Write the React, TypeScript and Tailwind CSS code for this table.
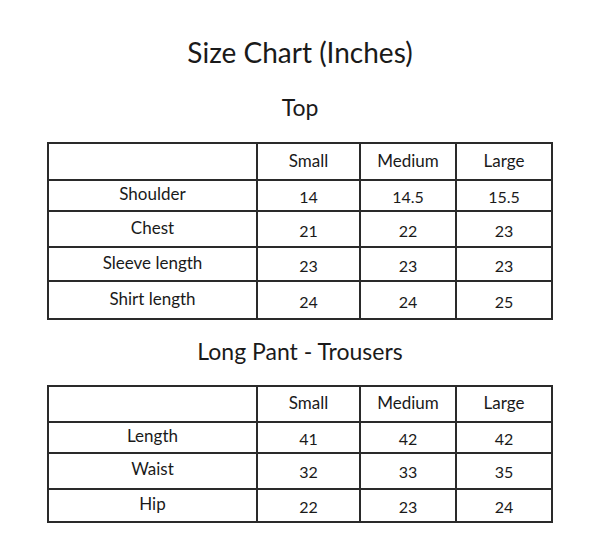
import React from "react";

const font = { fontFamily: "Lato, 'Open Sans', sans-serif" };

type Row = { label: string; vals: string[]; h: string };

function SizeTable({ rows }: { rows: Row[] }) {
  return (
    <table className="table-fixed border-collapse w-[504px] text-[17px] text-[#1a1a1a]">
      <colgroup>
        <col className="w-[209px]" />
        <col className="w-[103px]" />
        <col className="w-[96px]" />
        <col className="w-[96px]" />
      </colgroup>
      <tbody>
        {rows.map((r, i) => (
          <tr key={i} className={r.h}>
            <td className="border-2 border-[#2a2a2a] text-center align-middle p-0 pb-[3px]">{r.label}</td>
            {r.vals.map((v, j) => (
              <td
                key={j}
                className={
                  "border-2 border-[#2a2a2a] text-center align-middle p-0 " +
                  (i === 0 ? "pb-[2px]" : "pt-[3px] text-[16px]")
                }
              >
                {v}
              </td>
            ))}
          </tr>
        ))}
      </tbody>
    </table>
  );
}

export default function App() {
  const top: Row[] = [
    { label: "", vals: ["Small", "Medium", "Large"], h: "h-[37px]" },
    { label: "Shoulder", vals: ["14", "14.5", "15.5"], h: "h-[31px]" },
    { label: "Chest", vals: ["21", "22", "23"], h: "h-[36px]" },
    { label: "Sleeve length", vals: ["23", "23", "23"], h: "h-[34px]" },
    { label: "Shirt length", vals: ["24", "24", "25"], h: "h-[38px]" },
  ];
  const pant: Row[] = [
    { label: "", vals: ["Small", "Medium", "Large"], h: "h-[36px]" },
    { label: "Length", vals: ["41", "42", "42"], h: "h-[30px]" },
    { label: "Waist", vals: ["32", "33", "35"], h: "h-[36px]" },
    { label: "Hip", vals: ["22", "23", "24"], h: "h-[33px]" },
  ];
  return (
    <div className="w-[600px] h-[559px] bg-white flex flex-col items-center pt-[35px]" style={font}>
      <div className="text-[28px] leading-[34px] text-[#1a1a1a]">Size Chart (Inches)</div>
      <div className="mt-[23px] text-[23px] leading-[30px] text-[#1a1a1a]">Top</div>
      <div className="mt-[20px]">
        <SizeTable rows={top} />
      </div>
      <div className="mt-[16px] text-[23px] leading-[30px] text-[#1a1a1a]">Long Pant - Trousers</div>
      <div className="mt-[19px]">
        <SizeTable rows={pant} />
      </div>
    </div>
  );
}
